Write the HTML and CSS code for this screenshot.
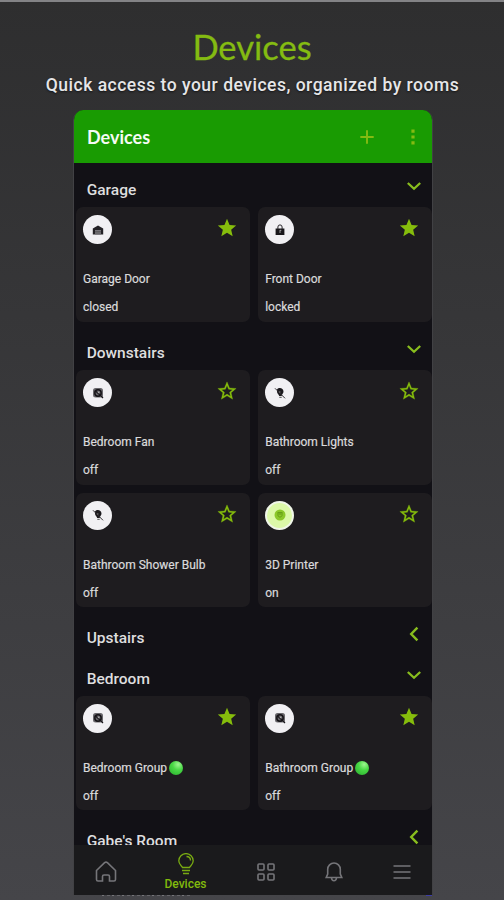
FILE: index.html
```
<!DOCTYPE html>
<html lang="en">
<head>
<meta charset="utf-8">
<title>Devices</title>
<link rel="stylesheet" href="styles.css">
</head>
<body>
<svg class="defs" width="0" height="0">
  <symbol id="star" viewBox="0 0 24 24"><path fill="currentColor" d="M12 17.3 18.2 21l-1.65-7.03L22 9.24l-7.2-.61L12 2 9.2 8.63 2 9.24l5.46 4.73L5.82 21z"/></symbol>
  <symbol id="star-o" viewBox="0 0 24 24"><path fill="currentColor" stroke="currentColor" stroke-width=".3" d="m22 9.24-7.19-.62L12 2 9.19 8.63 2 9.24l5.46 4.73L5.82 21 12 17.27 18.18 21l-1.63-7.03zM12 15.4l-3.76 2.27 1-4.28-3.32-2.88 4.38-.38L12 6.1l1.71 4.04 4.38.38-3.32 2.88 1 4.28z"/></symbol>
  <symbol id="down" viewBox="0 0 16 16"><path d="M1.800 5 8 10.800 14.200 5" fill="none" stroke="currentColor" stroke-width="2.300"/></symbol>
  <symbol id="left" viewBox="0 0 16 16"><path d="M11.400 1.600 5.200 8l6.200 6.400" fill="none" stroke="currentColor" stroke-width="2.400"/></symbol>
  <symbol id="garage" viewBox="0 0 12 12"><path d="M.8 10.500V4.400L6 1.400l5.200 3v6.100z" fill="#242226"/><path d="M3 6h6v4.500H3z" fill="#77757a"/><path d="M3 7.500h6M3 9h6" stroke="#444" stroke-width=".5"/></symbol>
  <symbol id="lock" viewBox="0 0 12 12"><path d="M1.600 4.600h8.800v6.400H1.600z" fill="#19171b"/><path d="M3.900 5V3a2.100 2.100 0 0 1 4.200 0v2" fill="none" stroke="#29272b" stroke-width="1"/><path d="M6 6.300h1.300M6 6v3" stroke="#aaa" stroke-width=".9"/></symbol>
  <symbol id="fan" viewBox="0 0 12 12"><rect x="1" y="1" width="10" height="9.500" rx="2.500" fill="#69676c"/><circle cx="6" cy="6" r="3.200" fill="none" stroke="#151317" stroke-width="1.500"/><path d="m3 3.500 5.500 5M9 9l2 2" stroke="#19171b" stroke-width="1.300"/><circle cx="6.600" cy="5.300" r=".9" fill="#aaa"/></symbol>
  <symbol id="bulb-off" viewBox="0 0 12 12"><path d="M3 2.500C5 0 9.500 1 9.500 4.700c0 1.700-1.600 2.300-1.800 4.300H5.200C5 7.500 3 6.500 3 4.700z" fill="#1b191d"/><path d="m1 1.300 10 10" stroke="#333135" stroke-width="1"/><path d="M5.300 10.300h2.400" stroke="#555" stroke-width="1"/><circle cx="5.800" cy="5" r=".7" fill="#888"/></symbol>
  <symbol id="printer" viewBox="0 0 12 12"><circle cx="6" cy="6" r="5.500" fill="#8cc82b"/><path d="M3.500 3.600h5M4 4v2.500c.5 2 3.500 2 4 0V4M6 4v2" fill="none" stroke="#649c16" stroke-width="1"/></symbol>
</svg>
<main class="promo">
  <h1 class="title">Devices</h1>
  <p class="subtitle">Quick access to your devices, organized by rooms</p>
  <div class="phone">
    <header class="appbar">
      <h2 class="appbar-title">Devices</h2>
      <svg class="plus" viewBox="0 0 14 14"><path d="M7 .3v13.400M.3 7h13.400" stroke="currentColor" stroke-width="1.900"/></svg>
      <svg class="more" viewBox="0 0 4 16"><path d="M.4 .6h3.200v3.200H.4zM.4 6.400h3.200v3.200H.4zM.4 12.200h3.200v3.200H.4z" fill="currentColor"/></svg>
    </header>
    <div class="list">
      <div class="room"><h3>Garage</h3><svg class="chev"><use href="#down"/></svg></div>
      <div class="grid">
        <article class="card"><div class="top"><span class="disc"><svg><use href="#garage"/></svg></span><svg class="star"><use href="#star"/></svg></div><p class="name">Garage Door</p><p class="state">closed</p></article>
        <article class="card"><div class="top"><span class="disc"><svg><use href="#lock"/></svg></span><svg class="star"><use href="#star"/></svg></div><p class="name">Front Door</p><p class="state">locked</p></article>
      </div>
      <div class="room"><h3>Downstairs</h3><svg class="chev"><use href="#down"/></svg></div>
      <div class="grid">
        <article class="card"><div class="top"><span class="disc"><svg><use href="#fan"/></svg></span><svg class="star"><use href="#star-o"/></svg></div><p class="name">Bedroom Fan</p><p class="state">off</p></article>
        <article class="card"><div class="top"><span class="disc"><svg><use href="#bulb-off"/></svg></span><svg class="star"><use href="#star-o"/></svg></div><p class="name">Bathroom Lights</p><p class="state">off</p></article>
        <article class="card"><div class="top"><span class="disc"><svg><use href="#bulb-off"/></svg></span><svg class="star"><use href="#star-o"/></svg></div><p class="name">Bathroom Shower Bulb</p><p class="state">off</p></article>
        <article class="card"><div class="top"><span class="disc on"><svg><use href="#printer"/></svg></span><svg class="star"><use href="#star-o"/></svg></div><p class="name">3D Printer</p><p class="state">on</p></article>
      </div>
      <div class="room"><h3>Upstairs</h3><svg class="chev"><use href="#left"/></svg></div>
      <div class="room"><h3>Bedroom</h3><svg class="chev"><use href="#down"/></svg></div>
      <div class="grid">
        <article class="card"><div class="top"><span class="disc"><svg><use href="#fan"/></svg></span><svg class="star"><use href="#star"/></svg></div><p class="name">Bedroom Group<i class="dot"></i></p><p class="state">off</p></article>
        <article class="card"><div class="top"><span class="disc"><svg><use href="#fan"/></svg></span><svg class="star"><use href="#star"/></svg></div><p class="name">Bathroom Group<i class="dot"></i></p><p class="state">off</p></article>
      </div>
      <div class="room"><h3>Gabe's Room</h3><svg class="chev"><use href="#left"/></svg></div>
    </div>
    <nav class="nav">
      <a class="tab"><svg width="22" height="22" viewBox="0 0 22 22"><path d="M1.500 9.500 9.600 1.700q1.400-1.200 2.800 0l8.100 7.800v9q0 1.500-1.500 1.500h-4.500v-4.500q0-1.500-1.500-1.500h-4q-1.500 0-1.500 1.500V20H3q-1.500 0-1.500-1.500z"/></svg></a>
      <a class="tab active"><svg width="18" height="22" viewBox="0 0 18 22"><path d="M5.500 14.500C4.500 12.500 1.800 11.500 1.800 7.800a7.200 7.200 0 0 1 14.400 0c0 3.700-2.700 4.700-3.700 6.700zM5 17.500h8M6 20.500h6M9.500 3.500c2.500 0 4 1.800 4 4"/></svg><span>Devices</span></a>
      <a class="tab"><svg width="18" height="18" viewBox="0 0 18 18"><rect x="1" y="1" width="6" height="6" rx="1"/><rect x="11" y="1" width="6" height="6" rx="1"/><rect x="1" y="11" width="6" height="6" rx="1"/><rect x="11" y="11" width="6" height="6" rx="1"/></svg></a>
      <a class="tab"><svg width="18" height="20" viewBox="0 0 18 20"><path d="M1.200 15.500 2.700 12V7.300a6.300 6.300 0 0 1 12.600 0V12l1.500 3.500zM6.500 16c.4 3.600 4.600 3.600 5 0"/></svg></a>
      <a class="tab"><svg width="18" height="16" viewBox="0 0 18 16"><path d="M.5 2h17M.5 8h17M.5 14h17"/></svg></a>
    </nav>
  </div>
  <div class="edge"><i class="edge-marks"></i><i class="edge-blue"></i></div>
</main>
</body>
</html>
```
FILE: styles.css
```
* { box-sizing: border-box; margin: 0; padding: 0; }
body {
  width: 504px;
  height: 900px;
  overflow: hidden;
  font-family: Roboto, "Liberation Sans", sans-serif;
  background: linear-gradient(#2e2e2f 0%, #363638 35%, #454549 100%);
}
.defs { display: block; position: absolute; }
.promo {
  height: 900px;
  border-top: 2px solid #838386;
  display: flex;
  flex-direction: column;
  align-items: center;
}
.title {
  margin-top: 23px;
  height: 44px;
  font: 400 34.500px/44px Lato, sans-serif;
  letter-spacing: 0;
  -webkit-text-stroke: 0.3px #84bb12;
  color: #84bb12;
}
.subtitle {
  height: 24px;
  margin-top: 4px;
  margin-left: 1px;
  font-size: 17.500px;
  line-height: 24px;
  font-weight: 500;
  letter-spacing: 0.500px;
  color: #e6e6e8;
  white-space: nowrap;
  text-shadow: 0 1px 2px #151515;
}
.phone {
  width: 360px;
  height: 785px;
  flex: none;
  margin-top: 13px;
  margin-left: 73px;
  align-self: flex-start;
  border: 1px solid #414144;
  border-top: 0;
  border-bottom: 0;
  border-radius: 10px 10px 0 0;
  background: #121116;
  overflow: hidden;
  display: flex;
  flex-direction: column;
}
.appbar {
  height: 53px;
  flex: none;
  display: flex;
  align-items: center;
  padding: 0 18px 0 14px;
  margin: 0 -1px;
  background: #199b02;
  color: #84bb12;
}
.appbar-title {
  flex: 1;
  font: 700 18px/24px Lato, sans-serif;
  color: #f6fbf5;
}
.plus { width: 14px; height: 14px; margin-right: 37px; }
.more { width: 4px; height: 16px; }
.list {
  flex: 1;
  min-height: 0;
  overflow: hidden;
  padding-top: 4px;
}
.room {
  height: 40.300px;
  display: flex;
  justify-content: space-between;
  padding: 0 10px 0 12.700px;
}
.room h3 {
  padding-top: 13px;
  font-size: 15.500px;
  line-height: 20px;
  font-weight: 500;
  color: #dededf;
}
.chev { width: 16px; height: 16px; margin-top: 11px; color: #88bd1e; }
.grid {
  display: grid;
  grid-template-columns: 174px 174px;
  gap: 8.200px;
  padding: 0 0 8px 2px;
}
.card {
  height: 114.500px;
  padding: 8px 12px 0 7px;
  border-radius: 7px;
  background: #1e1c1f;
  color: #dadadb;
  font-size: 12px;
}
.top { display: flex; justify-content: space-between; height: 54px; }
.disc {
  width: 29px;
  height: 29px;
  border-radius: 50%;
  background: #f1f0f3;
  display: flex;
  align-items: center;
  justify-content: center;
}
.disc svg { width: 12px; height: 12px; }
.disc.on { background: #dcf9a8; border: 2px solid #f0f6e8; }
.star { width: 22px; height: 22px; margin-top: 2px; color: #86bd0c; }
.name { height: 20px; line-height: 20px; display: flex; align-items: center; white-space: nowrap; -webkit-text-stroke: 0.2px #dadadb; }
.state { margin-top: 8px; line-height: 20px; -webkit-text-stroke: 0.2px #dadadb; }
.dot {
  width: 14px;
  height: 14px;
  margin-left: 2px;
  border-radius: 50%;
  background: radial-gradient(circle at 65% 25%, #9df58f 0%, #49d845 40%, #27ad2c 100%);
}
.nav {
  height: 50px;
  flex: none;
  display: grid;
  grid-template-columns: 64px 95px 65px 71px 65px;
  background: #1a1a1c;
}
.tab {
  display: flex;
  flex-direction: column;
  align-items: center;
  justify-content: center;
  padding-top: 3px;
  color: #757579;
}
.tab svg { fill: none; stroke: currentColor; stroke-width: 1.600; }
.tab.active { color: #78aa12; justify-content: flex-start; padding-top: 8px; }
.tab.active svg { stroke-width: 1.300; }
.tab.active span { margin-top: 1px; font-size: 12px; line-height: 16px; font-weight: 500; color: #82ba0c; }
.edge {
  width: 360px;
  height: 3px;
  flex: none;
  margin-left: 73px;
  align-self: flex-start;
  display: flex;
  justify-content: space-between;
  padding: 0 1px 0 29px;
}
.edge-marks { width: 90px; height: 1px; background: repeating-linear-gradient(90deg, #77777b 0 2px, transparent 2px 5px, #66666a 5px 8px, transparent 8px 10px); }
.edge-blue { width: 6px; height: 1px; background: #3d3da8; }
```
